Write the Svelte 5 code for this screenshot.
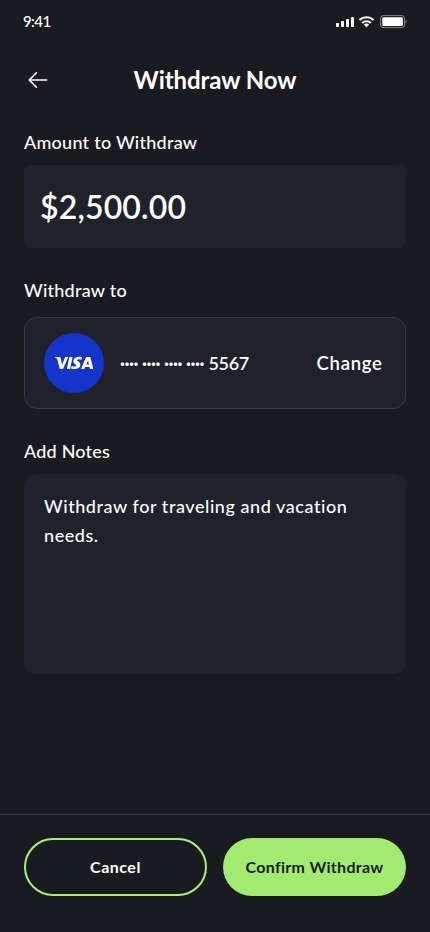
<script>
  let amount = $state('$2,500.00');
  let notes = $state('Withdraw for traveling and vacation needs.');
  const last4 = '5567';
</script>

<div class="screen">
  <div class="status">
    <span class="time">9:41</span>
    <svg width="71" height="14" viewBox="0 0 71 14" fill="#fff">
      <rect x="0" y="8" width="3" height="4" rx="0.8" />
      <rect x="5" y="6" width="3" height="6" rx="0.8" />
      <rect x="10" y="4" width="3" height="8" rx="0.8" />
      <rect x="15" y="2" width="3" height="10" rx="0.8" />
      <g fill="none" stroke="#fff" stroke-width="2.1">
        <path d="M23.5 5.1a10.2 10.2 0 0 1 14 0" />
        <path d="M26.2 8a6.2 6.2 0 0 1 8.6 0" />
      </g>
      <path d="M27.9 9.7a3.8 3.8 0 0 1 5.2 0L30.5 12.3z" />
      <rect x="44.6" y="0.6" width="24" height="12" rx="2.6" fill="none" stroke="#fff" stroke-opacity=".45" />
      <rect x="46.3" y="2.2" width="20.6" height="8.8" rx="1.2" />
      <path d="M69.7 4.8c1.3.7 1.3 3.1 0 3.8z" fill-opacity=".5" />
    </svg>
  </div>

  <header>
    <button class="back" aria-label="Back">
      <svg width="20" height="18" viewBox="0 0 20 18" fill="none" stroke="#fff" stroke-width="1.6" stroke-linecap="round" stroke-linejoin="round">
        <path d="M18.7 9H1.2M8.4 1.7L1.2 9l7.2 7.3" />
      </svg>
    </button>
    <h1>Withdraw Now</h1>
  </header>

  <main>
    <div class="label l1">Amount to Withdraw</div>
    <div class="amount"><span>{amount}</span></div>

    <div class="label l2">Withdraw to</div>
    <div class="card">
      <div class="logo">
        <svg width="40" height="14" viewBox="0 0 40 14" fill="#fff">
          <path d="M0.7 0.9H5.3Q6.5 1 6.8 2.2L8.1 8.7L11.1 0.9H14.3L9 13H5.8L3.4 3.6Q3.2 2.6 2.5 2.2Q1.8 1.7 0.7 1.4Z" />
          <path d="M15.4 0.9H18.6L16 13H12.8Z" />
          <path d="M28 1.1L27.4 3.7Q23.8 2.5 23 3.9C22.5 5.2 26.8 5.6 26.4 9C26 12.8 20.9 13.9 17 12.6L17.6 9.9Q21.5 11.4 22.3 9.8C22.8 8.2 18.9 8 19.3 4.7C19.8 1.2 24.1 0 28 1.1Z" />
          <path fill-rule="evenodd" d="M32.6 0.9H36.3L39.3 13H36L35.6 11H31.2L30.4 13H27L31.6 1.9Q32 1 32.6 0.9ZM34.1 4.4L32.3 8.6H35Z" />
        </svg>
      </div>
      <span class="number"><span class="dots">···· ···· ···· ····</span><b>{last4}</b></span>
      <button class="change">Change</button>
    </div>

    <div class="label l3">Add Notes</div>
    <div class="notes">{notes}</div>
  </main>

  <footer>
    <button class="cancel"><span>Cancel</span></button>
    <button class="confirm"><span>Confirm Withdraw</span></button>
  </footer>
</div>

<style>
  :global(body) { background: #1a1b20; }
  .screen {
    width: 430px; height: 932px; box-sizing: border-box; overflow: hidden;
    display: flex; flex-direction: column;
    background: #1a1b20; color: #fff;
    font-family: Lato, 'Open Sans', sans-serif; font-weight: 500;
    font-variant-ligatures: none;
  }
  button { font: inherit; color: inherit; background: none; border: 0; padding: 0; margin: 0; }
  svg { display: block; }
  .status { height: 44px; flex: none; display: flex; justify-content: space-between; align-items: center; padding: 0 23px 0 23px; }
  .time { font-size: 15px; line-height: 20px; letter-spacing: -0.6px; padding-bottom: 2px; }
  header { height: 72px; flex: none; display: grid; grid-template-columns: 52px 1fr 52px; align-items: center; }
  .back { padding-left: 28px; height: 20px; }
  h1 { margin: 0; text-align: center; font-size: 24px; line-height: 30px; font-weight: 700; letter-spacing: -0.08px; }
  main { flex: 1; padding: 12px 24px 0; display: flex; flex-direction: column; }
  .label { font-size: 18px; line-height: 28px; height: 28px; margin-bottom: 9px; letter-spacing: 0.25px; }
  .amount { height: 83px; border-radius: 8px; background: #20222b; display: flex; align-items: center; padding-left: 16px; font-size: 32px; font-weight: 600; letter-spacing: 0.15px; }
  .l2 { margin-top: 28px; margin-bottom: 13px; }
  .card { height: 92px; box-sizing: border-box; border: 1px solid #383a42; border-radius: 13px; background: #20222b; display: flex; align-items: center; padding: 0 23px 0 19px; }
  .logo { width: 60px; height: 60px; border-radius: 50%; background: #1434cb; display: flex; align-items: center; justify-content: center; }
  .number { margin-left: 16px; display: flex; align-items: center; font-size: 18px; font-weight: 600; flex: 1; }
  .dots { width: 84px; white-space: pre; font-weight: 700; letter-spacing: -0.43px; }
  .number b { font-weight: 600; margin-left: 4.5px; letter-spacing: -0.35px; }
  .change { font-size: 18.5px; font-weight: 600; letter-spacing: 0.75px; margin-right: -0.7px; }
  .l3 { margin-top: 28px; margin-bottom: 9px; letter-spacing: 0.2px; }
  .notes { height: 200px; box-sizing: border-box; border-radius: 13px; background: #20222b; padding: 18px 20px; font-size: 18px; line-height: 29px; letter-spacing: 0.56px; }
  footer { flex: none; height: 118px; box-sizing: border-box; border-top: 1px solid #3b3d42; padding: 23px 24px 0; display: grid; grid-template-columns: 1fr 1fr; gap: 16px; }
  footer button { height: 58px; box-sizing: border-box; border-radius: 29px; font-size: 16px; font-weight: 700; padding-bottom: 1px; }
  .cancel { border: 2px solid #aaf078; letter-spacing: 0.5px; }
  .confirm { background: #a3eb70; color: #1a1b20; letter-spacing: 0.3px; }
</style>
